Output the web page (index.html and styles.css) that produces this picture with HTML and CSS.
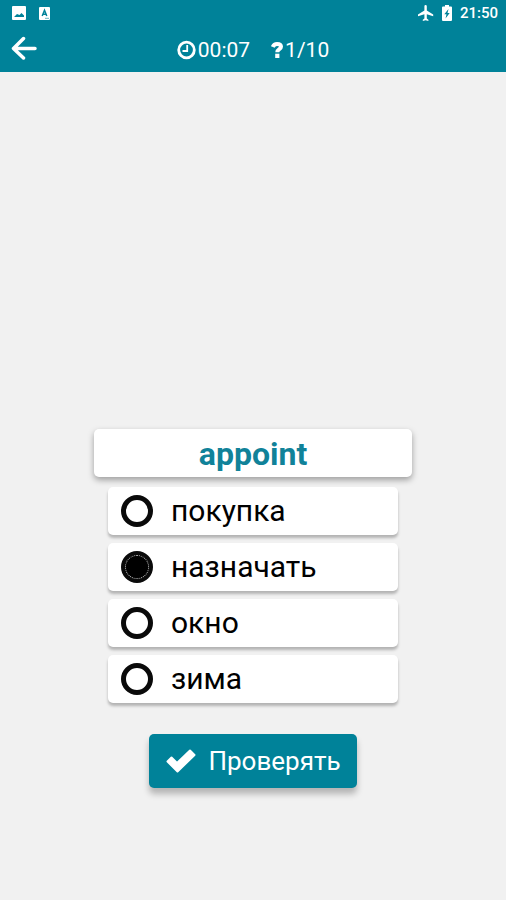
FILE: index.html
```html
<!DOCTYPE html>
<html lang="ru">
<head>
<meta charset="utf-8">
<meta name="viewport" content="width=device-width, initial-scale=1">
<title>appoint</title>
<link rel="stylesheet" href="styles.css">
</head>
<body>
<header class="top">
  <div class="status">
    <div class="status-group notices">
      <svg width="14" height="14" viewBox="0 0 14 14" aria-hidden="true"><path fill="#fff" fill-rule="evenodd" d="M1 0h12a1 1 0 0 1 1 1v12a1 1 0 0 1-1 1H1a1 1 0 0 1-1-1V1a1 1 0 0 1 1-1zM2 11h10V9.500L9.500 7 7.500 9 5 8z"/></svg>
      <svg width="11" height="13" viewBox="0 0 11 13" aria-hidden="true"><path fill="#fff" d="M1 0h9a1 1 0 0 1 1 1v11a1 1 0 0 1-1 1H1a1 1 0 0 1-1-1V1a1 1 0 0 1 1-1z"/><path fill="none" stroke="#008299" stroke-width="1.500" d="M3.200 9 5.500 3.200 7.800 9M4 7.200h3"/><path stroke="#008299" stroke-width=".6" d="M6 11.300h4"/></svg>
    </div>
    <div class="status-group">
      <svg width="16" height="16" viewBox="3 2 18 20" aria-hidden="true"><path fill="#fff" d="M21 16v-2l-8-5V3.500a1.500 1.500 0 0 0-3 0V9l-8 5v2l8-2.500V19l-2 1.500V22l3.500-1 3.500 1v-1.500L13 19v-5.500z"/></svg>
      <svg width="10" height="16" viewBox="0 0 10 16" aria-hidden="true"><path fill="#fff" d="M3 0h4v1.500h2a1 1 0 0 1 1 1V15a1 1 0 0 1-1 1H1a1 1 0 0 1-1-1V2.500a1 1 0 0 1 1-1h2z"/><path fill="#008299" d="M6.500 4 2.300 9.300h2.200L3.500 13.500 7.700 8H5.500z"/></svg>
      <span class="clock">21:50</span>
    </div>
  </div>
  <div class="bar">
    <button class="back" type="button" aria-label="Назад">
      <svg width="26" height="24" viewBox="0 0 26 24" aria-hidden="true"><path fill="none" stroke="#fff" stroke-width="3.500" stroke-linecap="round" stroke-linejoin="round" d="M24 12.500H2.500M12.500 2.500 2.500 12.500 12.500 22"/></svg>
    </button>
    <div class="stat">
      <svg width="20" height="20" viewBox="0 0 20 20" aria-hidden="true"><circle cx="9.500" cy="10" r="7.800" fill="none" stroke="#fff" stroke-width="2.800"/><path fill="none" stroke="#fff" stroke-width="1.800" d="M10.200 5v6H5.500"/></svg>
      <span>00:07</span>
    </div>
    <div class="stat">
      <svg width="13" height="18" viewBox="0 0 13 18" aria-hidden="true"><path fill="none" stroke="#fff" stroke-width="4" d="M1.800 6C2.600 4 4 3 6 3c2.400 0 4 1.100 4 2.800 0 2.500-3.700 2.300-3.700 5.500"/><path fill="#fff" d="M4.200 12.700h4.200V17H4.200z"/></svg>
      <span>1/10</span>
    </div>
  </div>
</header>
<main class="quiz">
  <h1 class="word">appoint</h1>
  <form class="form">
    <fieldset class="options" aria-label="appoint">
      <label class="option"><input type="radio" name="answer"><span>покупка</span></label>
      <label class="option"><input type="radio" name="answer" checked><span>назначать</span></label>
      <label class="option"><input type="radio" name="answer"><span>окно</span></label>
      <label class="option"><input type="radio" name="answer"><span>зима</span></label>
    </fieldset>
    <button class="check" type="button">
      <svg width="30" height="24" viewBox="0 0 30 24" aria-hidden="true"><path fill="#fff" stroke="#fff" stroke-width="2" stroke-linejoin="round" d="M1.500 12.500 5.500 8.500l5.500 5.500L24 1.500l4.500 4.500L11.500 22.500z"/></svg>
      <span>Проверять</span>
    </button>
  </form>
</main>
</body>
</html>
```
FILE: styles.css
```css
* {
  box-sizing: border-box;
}

body {
  margin: 0;
  min-height: 100vh;
  display: flex;
  flex-direction: column;
  background: #f1f1f1;
  color: #000;
  font-family: Roboto, "Liberation Sans", sans-serif;
}

svg {
  display: block;
  flex: none;
}

.top {
  background: #008299;
  color: #fff;
  padding-bottom: 2px;
}

.status {
  display: flex;
  justify-content: space-between;
  align-items: center;
  height: 26px;
  padding: 0 8px 0 12px;
}

.status-group {
  display: flex;
  align-items: center;
  gap: 8px;
}

.notices {
  gap: 13px;
}

.clock {
  font-size: 15px;
  font-weight: 500;
  line-height: 20px;
}

.bar {
  display: grid;
  grid-template-columns: 1fr auto auto 1fr;
  column-gap: 21px;
  align-items: center;
  height: 44px;
  padding: 0 11px;
}

.back {
  justify-self: start;
  padding: 0;
  border: 0;
  background: none;
}

.stat {
  display: flex;
  align-items: center;
  gap: 1px;
  padding-top: 4px;
  font-size: 21px;
  line-height: 24px;
}

.quiz {
  flex: 1;
  display: flex;
  flex-direction: column;
  justify-content: flex-end;
  align-items: center;
  gap: 10px;
  padding: 24px 16px 112px;
}

.word {
  width: 100%;
  max-width: 318px;
  margin: 0;
  padding: 5px 0 3px;
  border-radius: 5px;
  background: #fff;
  box-shadow: 0 3px 6px rgba(0, 0, 0, .35);
  color: #108299;
  font-size: 32px;
  font-weight: 700;
  line-height: 40px;
  text-align: center;
}

.form {
  width: 100%;
  max-width: 290px;
  display: flex;
  flex-direction: column;
  align-items: center;
  gap: 31px;
}

.options {
  width: 100%;
  min-width: 0;
  margin: 0;
  padding: 0;
  border: 0;
  display: flex;
  flex-direction: column;
  gap: 8px;
}

.option {
  display: flex;
  align-items: center;
  gap: 18px;
  min-height: 48px;
  padding: 0 13px;
  border-radius: 5px;
  background: #fff;
  box-shadow: 0 3px 3px rgba(0, 0, 0, .26);
  font-size: 30px;
  line-height: 40px;
}

.option input {
  appearance: none;
  flex: none;
  width: 32px;
  height: 32px;
  margin: 0;
  border: 5px solid #0a0a0a;
  border-radius: 50%;
}

.option input:checked {
  background: #000;
  outline: 1px dotted #bbb;
  outline-offset: -5px;
}

.check {
  display: flex;
  align-items: center;
  gap: 12px;
  height: 54px;
  padding: 0 16px 0 17px;
  border: 0;
  border-radius: 5px;
  background: #008299;
  box-shadow: 0 6px 6px rgba(0, 0, 0, .25);
  color: #fff;
  font: 26px/32px Roboto, "Liberation Sans", sans-serif;
}
```
